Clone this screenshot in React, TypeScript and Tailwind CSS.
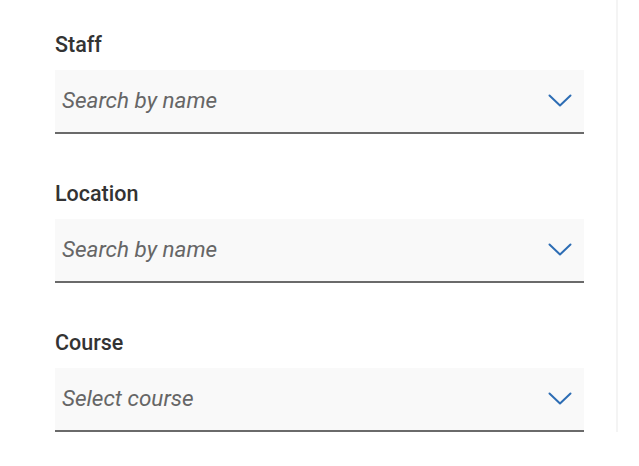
type FieldProps = { label: string; placeholder: string };

function SelectField({ label, placeholder }: FieldProps) {
  return (
    <div className="flex flex-col">
      <label className="text-[21.5px] leading-[24px] font-medium text-[#333333]">{label}</label>
      <div className="mt-[13px] flex h-[64px] items-center justify-between border-b-2 border-[#6a6a6a] bg-[#f9f9f9] pl-[7px] pr-[12px]">
        <span className="text-[22.5px] italic text-[#666666]">{placeholder}</span>
        <svg width="24" height="14" viewBox="0 0 24 14" fill="none" className="text-[#2d6db4]">
          <path d="M1.5 1.5 L12 11.5 L22.5 1.5" stroke="currentColor" strokeWidth="2" strokeLinecap="round" strokeLinejoin="round" />
        </svg>
      </div>
    </div>
  );
}

export default function App() {
  return (
    <div className="flex h-[466px] w-[639px] bg-white font-['Roboto',sans-serif]">
      <div className="flex h-[432px] w-[618px] flex-col gap-[48px] border-r-2 border-[#f4f4f4] pl-[55px] pr-[32px] pt-[33px]">
        <SelectField label="Staff" placeholder="Search by name" />
        <SelectField label="Location" placeholder="Search by name" />
        <SelectField label="Course" placeholder="Select course" />
      </div>
    </div>
  );
}
